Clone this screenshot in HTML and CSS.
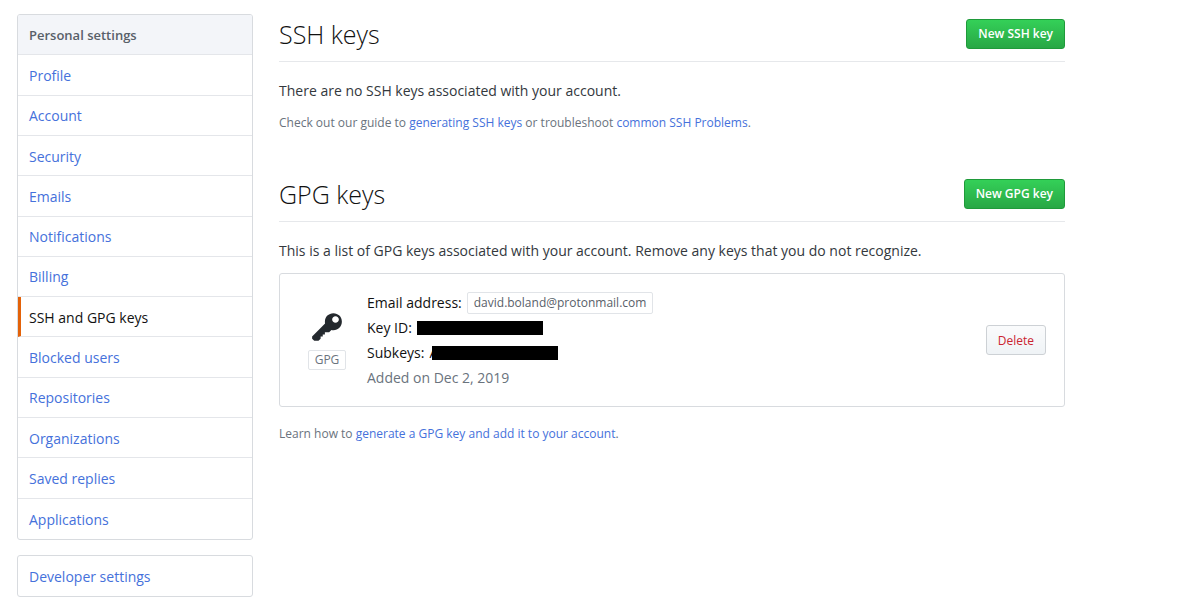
FILE: index.html
```html
<!DOCTYPE html>
<html lang="en">

<head>
    <meta charset="UTF-8">
    <meta name="viewport" content="width=device-width, initial-scale=1.0">
    <title>SSH and GPG keys</title>
    <link rel="stylesheet" href="styles.css">
</head>

<body>
    <div class="page">
        <aside class="sidebar">
            <nav class="menu menu-main">
                <h3 class="menu-heading">Personal settings</h3>
                <a class="menu-item" href="#">Profile</a>
                <a class="menu-item" href="#">Account</a>
                <a class="menu-item" href="#">Security</a>
                <a class="menu-item" href="#">Emails</a>
                <a class="menu-item" href="#">Notifications</a>
                <a class="menu-item" href="#">Billing</a>
                <a class="menu-item selected" href="#">SSH and GPG keys</a>
                <a class="menu-item" href="#">Blocked users</a>
                <a class="menu-item" href="#">Repositories</a>
                <a class="menu-item" href="#">Organizations</a>
                <a class="menu-item" href="#">Saved replies</a>
                <a class="menu-item" href="#">Applications</a>
            </nav>
            <nav class="menu">
                <a class="menu-item" href="#">Developer settings</a>
            </nav>
        </aside>

        <main class="content">
            <section class="keys">
                <div class="subhead">
                    <h2 class="subhead-title">SSH keys</h2>
                    <button class="btn btn-primary" type="button">New SSH key</button>
                </div>
                <p class="lead">There are no SSH keys associated with your account.</p>
                <p class="help">Check out our guide to <a href="#">generating SSH keys</a> or troubleshoot <a href="#">common SSH Problems</a>.</p>
            </section>

            <section class="keys">
                <div class="subhead">
                    <h2 class="subhead-title">GPG keys</h2>
                    <button class="btn btn-primary" type="button">New GPG key</button>
                </div>
                <p class="lead">This is a list of GPG keys associated with your account. Remove any keys that you do not recognize.</p>

                <div class="key-box">
                    <div class="key-type">
                        <svg class="key-icon" viewBox="0 0 14 16" width="30" height="34" aria-hidden="true">
                            <path fill-rule="evenodd" d="M12.83 2.17C12.08 1.42 11.14 1.03 10 1c-1.13.03-2.08.42-2.83 1.17S6.04 3.86 6.01 5c0 .3.03.59.09.89L0 12v1l1 1h2l1-1v-1h1v-1h1v-1h2l1.09-1.11c.3.08.59.11.91.11 1.14-.03 2.08-.42 2.83-1.17S13.97 6.14 14 5c-.03-1.14-.42-2.08-1.17-2.83zM11 5.58c-.87 0-1.58-.71-1.58-1.58 0-.87.71-1.58 1.58-1.58.87 0 1.58.71 1.58 1.58 0 .87-.71 1.58-1.58 1.58z" />
                        </svg>
                        <span class="label">GPG</span>
                    </div>
                    <div class="key-info">
                        <div class="key-line">Email address: <span class="label label-email">david.boland@protonmail.com</span></div>
                        <div class="key-line">Key ID: <span class="redacted"></span></div>
                        <div class="key-line">Subkeys: <span class="subkey">A<span class="redacted"></span></span></div>
                        <div class="key-line key-date">Added on Dec 2, 2019</div>
                    </div>
                    <button class="btn btn-danger" type="button">Delete</button>
                </div>

                <p class="help help-gpg">Learn how to <a href="#">generate a GPG key and add it to your account</a>.</p>
            </section>
        </main>
    </div>
</body>

</html>
```

FILE: styles.css
```css
* {
    box-sizing: border-box;
}

body {
    margin: 0;
    background: #fff;
    color: #33383d;
    font-family: "Open Sans", "Noto Sans", sans-serif;
    font-size: 14px;
    line-height: 24px;
}

h2,
h3,
p {
    margin: 0;
}

a {
    color: #4571db;
    text-decoration: none;
}

.page {
    display: flex;
    gap: 26px;
    padding: 14px 115px 14px 17px;
}

/* left menu */

.sidebar {
    flex: none;
    width: 236px;
}

.menu {
    display: grid;
    grid-auto-rows: 1fr;
    margin-bottom: 15px;
    border: 1px solid #d8dbdf;
    border-radius: 3px;
    overflow: hidden;
}

.menu-main {
    min-height: 526px;
}

.menu-heading,
.menu-item {
    display: flex;
    align-items: center;
    min-height: 40px;
    padding: 0 11px;
    border-bottom: 1px solid #e4e6ea;
}

.menu-heading {
    background: #f3f5f9;
    color: #586069;
    font-size: 13px;
    font-weight: 600;
}

.menu-item {
    padding-top: 2px;
}

.menu-item:last-child {
    border-bottom: 0;
}

.menu-item.selected {
    padding-left: 8px;
    border-left: 3px solid #e36209;
    color: #111;
}

/* right column */

.content {
    flex: 1;
    min-width: 0;
}

.keys {
    margin-bottom: 39px;
}

.subhead {
    display: flex;
    justify-content: space-between;
    align-items: center;
    height: 48px;
    padding-bottom: 8px;
    margin-bottom: 17px;
    border-bottom: 1px solid #e6e8eb;
}

.subhead-title {
    color: #111;
    font-size: 25px;
    font-weight: 300;
    line-height: 36px;
}

.help {
    margin-top: 8px;
    color: #6a737d;
    font-size: 12px;
}

.help-gpg {
    margin-top: 15px;
}

.btn {
    height: 30px;
    padding: 0 11px;
    border: 1px solid #cdd1d5;
    border-radius: 3px;
    font-family: inherit;
    font-size: 12px;
    font-weight: 600;
    cursor: pointer;
}

.btn-primary {
    border-color: #1f9a3a;
    background: linear-gradient(#34d058, #28a745);
    color: #fff;
}

.btn-danger {
    margin-left: auto;
    background: linear-gradient(#fafbfc, #eff3f6);
    color: #cb2431;
    font-weight: 400;
}

.key-box {
    display: flex;
    align-items: center;
    margin-top: 10px;
    padding: 16px 18px 16px 27px;
    border: 1px solid #d8dbdf;
    border-radius: 3px;
}

.key-type {
    display: flex;
    flex-direction: column;
    align-items: center;
    gap: 5px;
    width: 40px;
    margin-right: 20px;
}

.key-icon {
    fill: #24292e;
}

.label {
    padding: 0 6px;
    border: 1px solid #e1e4e8;
    border-radius: 2px;
    color: #6a737d;
    font-size: 12px;
    line-height: 18px;
}

.label-email {
    display: inline-block;
    color: #586069;
    line-height: 20px;
}

.key-line {
    display: flex;
    align-items: center;
    gap: 5px;
    height: 25px;
    color: #111;
}

.key-date {
    color: #6a737d;
}

.subkey {
    display: flex;
    align-items: center;
}

.redacted {
    width: 126px;
    height: 14px;
    background: #000;
}

/* the block sits over the start of the subkey */
.subkey .redacted {
    margin-left: -6px;
}
```
